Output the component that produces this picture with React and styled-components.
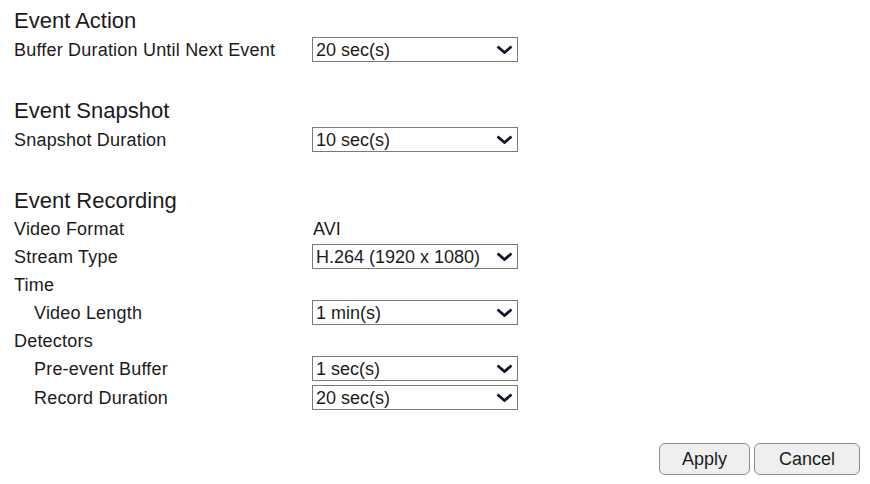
import React from 'react';
import styled, { createGlobalStyle } from 'styled-components';

const GlobalStyle = createGlobalStyle`
  body {
    margin: 0;
    background: #ffffff;
    color: #1b1b1b;
    font-family: "Liberation Sans", Arial, sans-serif;
  }
`;

const Page = styled.div`
  width: 870px;
  box-sizing: border-box;
  padding: 7px 10px 0 14px;
`;

const Section = styled.section`
  margin-top: ${p => (p.$first ? '0' : '33px')};
`;

const Heading = styled.div`
  font-size: 22px;
  line-height: 28px;
  height: 28px;
`;

const Row = styled.div`
  display: grid;
  grid-template-columns: 298px 206px;
  align-items: center;
  height: ${p => (p.$tall ? '29px' : '27px')};
`;

const Label = styled.div`
  font-size: 18px;
  line-height: 21px;
  letter-spacing: 0.2px;
  padding-top: 1px;
  padding-left: ${p => (p.$indent ? '20px' : '0')};
  white-space: nowrap;
`;

const Value = styled.div`
  font-size: 18px;
  line-height: 21px;
  padding-top: 1px;
  padding-left: 1px;
`;

const SelectWrap = styled.div`
  position: relative;
  width: 206px;
  height: 25px;
`;

const Select = styled.select`
  appearance: none;
  -webkit-appearance: none;
  width: 100%;
  height: 100%;
  box-sizing: border-box;
  margin: 0;
  padding: 0 0 0 3px;
  border: 1px solid #7a7a7a;
  border-radius: 0;
  background: #ffffff;
  color: #1b1b1b;
  font-family: "Liberation Sans", Arial, sans-serif;
  font-size: 18px;
  outline: none;
`;

const Chevron = styled.svg`
  position: absolute;
  right: 5px;
  top: 8px;
  pointer-events: none;
`;

const Footer = styled.div`
  display: flex;
  justify-content: flex-end;
  gap: 4px;
  margin-top: 31px;
`;

const Button = styled.button`
  height: 32px;
  padding: 0 ${p => p.$pad || 23}px;
  border: 1px solid #8c8c8c;
  border-radius: 6px;
  background: #efefef;
  color: #1b1b1b;
  font-family: "Liberation Sans", Arial, sans-serif;
  font-size: 18px;
`;

function Dropdown({ value, options }) {
  return (
    <SelectWrap>
      <Select defaultValue={value}>
        {options.map(o => (
          <option key={o}>{o}</option>
        ))}
      </Select>
      <Chevron width="17" height="9" viewBox="0 0 17 9">
        <polyline points="1.5,1.5 8.5,7.5 15.5,1.5" fill="none" stroke="#141428" strokeWidth="2.8" />
      </Chevron>
    </SelectWrap>
  );
}

const secs = ['1 sec(s)', '5 sec(s)', '10 sec(s)', '20 sec(s)', '30 sec(s)'];

function App() {
  return (
    <Page>
      <GlobalStyle />
      <Section $first>
        <Heading>Event Action</Heading>
        <Row $tall>
          <Label>Buffer Duration Until Next Event</Label>
          <Dropdown value="20 sec(s)" options={secs} />
        </Row>
      </Section>

      <Section>
        <Heading>Event Snapshot</Heading>
        <Row $tall>
          <Label>Snapshot Duration</Label>
          <Dropdown value="10 sec(s)" options={secs} />
        </Row>
      </Section>

      <Section>
        <Heading>Event Recording</Heading>
        <Row>
          <Label>Video Format</Label>
          <Value>AVI</Value>
        </Row>
        <Row $tall>
          <Label>Stream Type</Label>
          <Dropdown value="H.264 (1920 x 1080)" options={['H.264 (1920 x 1080)', 'H.264 (1280 x 720)', 'MJPEG (640 x 480)']} />
        </Row>
        <Row>
          <Label>Time</Label>
        </Row>
        <Row $tall>
          <Label $indent>Video Length</Label>
          <Dropdown value="1 min(s)" options={['1 min(s)', '2 min(s)', '5 min(s)']} />
        </Row>
        <Row>
          <Label>Detectors</Label>
        </Row>
        <Row $tall>
          <Label $indent>Pre-event Buffer</Label>
          <Dropdown value="1 sec(s)" options={secs} />
        </Row>
        <Row $tall>
          <Label $indent>Record Duration</Label>
          <Dropdown value="20 sec(s)" options={secs} />
        </Row>
      </Section>

      <Footer>
        <Button $pad={22}>Apply</Button>
        <Button $pad={24}>Cancel</Button>
      </Footer>
    </Page>
  );
}

export default App;
